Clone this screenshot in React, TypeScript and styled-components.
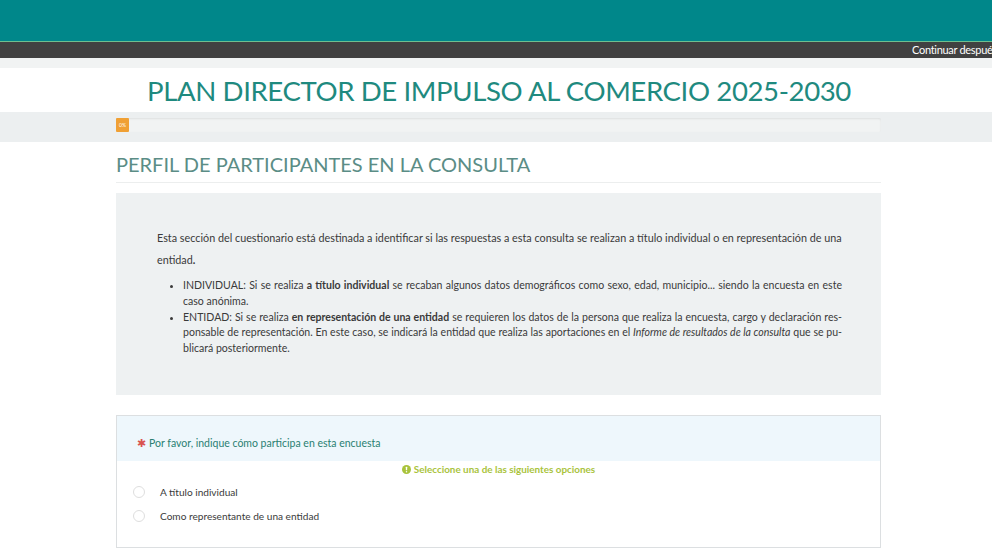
import React from 'react';
import styled, { createGlobalStyle } from 'styled-components';

const GlobalStyle = createGlobalStyle`
  body {
    margin: 0;
    background: #ffffff;
    font-family: Lato, 'Open Sans', sans-serif;
    color: #333333;
  }
  * {
    box-sizing: border-box;
  }
`;

const palette = {
  teal: '#00878a',
  title: '#1f8a7f',
  heading: '#5b8d86',
  dark: '#414141',
  band: '#eceff0',
  question: '#2a7f72',
  tip: '#a9c33c',
};

const options = ['A título individual', 'Como representante de una entidad'];

const App = () => {
  return (
    <>
      <GlobalStyle />
      <StHeader />
      <StNav>
        <StNavButton>Continuar después</StNavButton>
      </StNav>
      <StStrip />
      <StTitleBlock>
        <StTitle>PLAN DIRECTOR DE IMPULSO AL COMERCIO 2025-2030</StTitle>
      </StTitleBlock>
      <StProgressBand>
        <StProgress>
          <StProgressFill>0%</StProgressFill>
        </StProgress>
      </StProgressBand>
      <StMain>
        <StGroupTitle>PERFIL DE PARTICIPANTES EN LA CONSULTA</StGroupTitle>
        <StInfoBox>
          <StIntro>
            Esta sección del cuestionario está destinada a identificar si las
            respuestas a esta consulta se realizan a título individual o en
            representación de una entidad<b>.</b>
          </StIntro>
          <StList>
            <li>
              INDIVIDUAL: Si se realiza <b>a título individual</b> se recaban
              algunos datos demográficos como sexo, edad, municipio... siendo la
              encuesta en este caso anónima.
            </li>
            <li>
              ENTIDAD: Si se realiza <b>en representación de una entidad</b> se
              requieren los datos de la persona que realiza la encuesta, cargo y
              declaración res&shy;ponsable de representación. En este caso, se
              indicará la entidad que realiza las aportaciones en el{' '}
              <i>Informe de resultados de la consulta</i> que se pu&shy;blicará
              posteriormente.
            </li>
          </StList>
        </StInfoBox>
        <StQuestion>
          <StQuestionHead>
            <StAsterisk>✱</StAsterisk>
            Por favor, indique cómo participa en esta encuesta
          </StQuestionHead>
          <StTip>
            <svg width="9" height="9" viewBox="0 0 16 16">
              <circle cx="8" cy="8" r="8" fill={palette.tip} />
              <rect x="6.8" y="3.2" width="2.4" height="6.2" rx="1" fill="#fff" />
              <circle cx="8" cy="12" r="1.3" fill="#fff" />
            </svg>
            Seleccione una de las siguientes opciones
          </StTip>
          <StOptions>
            {options.map((label) => (
              <StOption key={label}>
                <StRadio />
                {label}
              </StOption>
            ))}
          </StOptions>
        </StQuestion>
      </StMain>
    </>
  );
};

export default App;

const StHeader = styled.div`
  height: 42px;
  background: ${palette.teal};
  border-bottom: 1px solid #6fbf8f;
`;
const StNav = styled.div`
  height: 16px;
  background: ${palette.dark};
  display: flex;
  justify-content: flex-end;
  overflow: hidden;
`;
const StNavButton = styled.span`
  flex-shrink: 0;
  margin-right: -5px;
  color: #ffffff;
  font-size: 11px;
  line-height: 16px;
  letter-spacing: -0.3px;
  white-space: nowrap;
`;
const StStrip = styled.div`
  height: 10px;
  background: #f1f3f3;
`;
const StTitleBlock = styled.div`
  height: 44px;
  background: #ffffff;
  display: flex;
  align-items: center;
  justify-content: center;
`;
const StTitle = styled.h1`
  margin: 0 0 0 6px;
  font-size: 27.6px;
  font-weight: 400;
  color: ${palette.title};
  letter-spacing: -0.4px;
`;
const StProgressBand = styled.div`
  height: 30px;
  background: ${palette.band};
  padding: 6px 0 0 116px;
`;
const StProgress = styled.div`
  width: 765px;
  height: 14px;
  background: #f1f3f3;
  border-radius: 2px;
  box-shadow: inset 0 1px 2px rgba(0, 0, 0, 0.08);
  display: flex;
`;
const StProgressFill = styled.div`
  width: 13px;
  height: 14px;
  background: #f0a034;
  border-radius: 1px;
  color: #ffffff;
  font-size: 5px;
  line-height: 14px;
  text-align: center;
`;
const StMain = styled.div`
  width: 765px;
  margin-left: 116px;
  padding-top: 9px;
`;
const StGroupTitle = styled.h2`
  margin: 0;
  padding-bottom: 5px;
  font-size: 20px;
  font-weight: 400;
  color: ${palette.heading};
  border-bottom: 1px solid #eceeee;
  line-height: 26px;
`;
const StInfoBox = styled.div`
  margin-top: 10px;
  height: 202px;
  background: #eef1f2;
  padding: 34px 39px 0 41px;
  font-size: 10.8px;
  color: #3a3a3a;
`;
const StIntro = styled.p`
  margin: 0;
  line-height: 22px;
`;
const StList = styled.ul`
  margin: 7px 0 0;
  padding-left: 26px;
  font-size: 10.55px;
  line-height: 15.75px;
  text-align: justify;
  hyphens: manual;
`;
const StQuestion = styled.div`
  margin-top: 20px;
  height: 133px;
  border: 1px solid #dcdfe1;
`;
const StQuestionHead = styled.div`
  height: 45px;
  background: #eef7fc;
  padding: 9px 0 0 20px;
  font-size: 10.5px;
  color: ${palette.question};
  display: flex;
  align-items: center;
  gap: 3px;
  line-height: 14px;
`;
const StAsterisk = styled.span`
  color: #d9534f;
  font-size: 11px;
`;
const StTip = styled.div`
  margin-top: 1px;
  display: flex;
  align-items: center;
  justify-content: center;
  gap: 3px;
  font-size: 9.9px;
  font-weight: 700;
  color: ${palette.tip};
  line-height: 14px;
`;
const StOptions = styled.div`
  padding: 9px 0 0 16px;
  display: flex;
  flex-direction: column;
  gap: 10px;
`;
const StOption = styled.div`
  display: flex;
  align-items: center;
  gap: 15px;
  font-size: 10.1px;
  color: #3a3a3a;
  line-height: 14px;
`;
const StRadio = styled.span`
  width: 12px;
  height: 12px;
  border-radius: 50%;
  border: 1px solid #dedede;
  background: #fff;
`;
